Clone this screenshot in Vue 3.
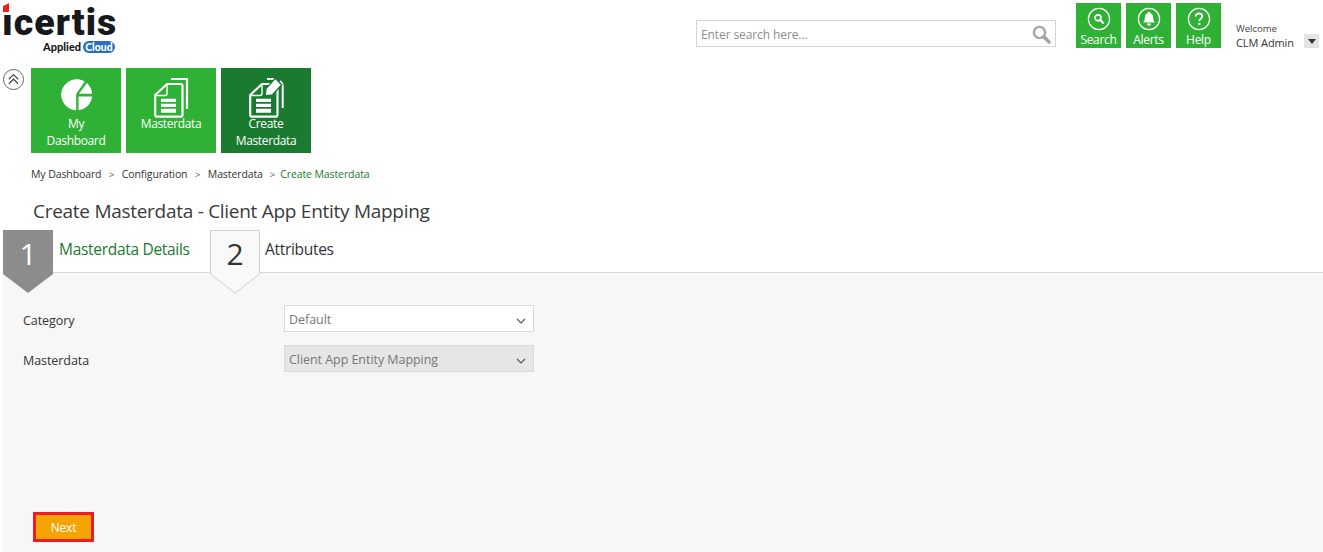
<script setup>
const topTiles = [
  { label: 'Search', icon: 'search' },
  { label: 'Alerts', icon: 'bell' },
  { label: 'Help', icon: 'help' }
]
const navTiles = [
  { lines: ['My', 'Dashboard'], icon: 'pie', active: false },
  { lines: ['Masterdata'], icon: 'docs', active: false },
  { lines: ['Create', 'Masterdata'], icon: 'create', active: true }
]
const crumbs = ['My Dashboard', 'Configuration', 'Masterdata']
</script>

<template>
  <div class="page">
    <header class="top">
      <div class="logo">
        <div class="wordmark">
          <span class="red-dot"></span>
          <span class="logo-text">ıcertis</span>
        </div>
        <div class="applied">
          <span>Applied</span><span class="cloud">Cloud</span>
        </div>
      </div>
      <div class="search">
        <span class="placeholder">Enter search here...</span>
        <svg class="search-glass" width="19" height="19" viewBox="0 0 19 19">
          <circle cx="7.5" cy="7.5" r="5.6" fill="none" stroke="#a6a6a6" stroke-width="2.4" />
          <path d="M11.8 11.8 L17 17" stroke="#a6a6a6" stroke-width="3.6" stroke-linecap="round" />
        </svg>
      </div>
      <div class="top-tiles">
        <div v-for="t in topTiles" :key="t.label" class="top-tile">
          <svg width="24" height="24" viewBox="0 0 24 24">
            <circle cx="12" cy="12" r="10.6" fill="none" stroke="#fff" stroke-width="1.3" />
            <g v-if="t.icon === 'search'">
              <circle cx="11" cy="10.8" r="3" fill="none" stroke="#fff" stroke-width="1.7" />
              <path d="M13.2 13 L16.2 16" stroke="#fff" stroke-width="2" stroke-linecap="round" />
            </g>
            <g v-else-if="t.icon === 'bell'">
              <path d="M12 4.8 C13 4.8 13.4 5.4 13.5 6.2 C15.6 6.9 16.2 8.8 16.2 11 C16.2 13.4 17 14.4 18 15.6 L6 15.6 C7 14.4 7.8 13.4 7.8 11 C7.8 8.8 8.4 6.9 10.5 6.2 C10.6 5.4 11 4.8 12 4.8 Z" fill="#fff" />
              <path d="M10 16.6 H14 C14 18 13 18.8 12 18.8 C11 18.8 10 18 10 16.6 Z" fill="#fff" />
            </g>
            <g v-else>
              <path d="M8.7 9.6 C8.7 7.6 10.2 6.5 12 6.5 C13.9 6.5 15.3 7.6 15.3 9.3 C15.3 11.6 12.3 11.6 12.3 14.2" fill="none" stroke="#fff" stroke-width="1.8" />
              <circle cx="12.3" cy="17" r="1.3" fill="#fff" />
            </g>
          </svg>
          <span class="top-label">{{ t.label }}</span>
        </div>
      </div>
      <div class="user">
        <div class="welcome">Welcome</div>
        <div class="user-name">CLM Admin</div>
      </div>
      <div class="user-caret"><i></i></div>
    </header>

    <nav class="nav">
      <div class="collapse">
        <svg width="21" height="21" viewBox="0 0 21 21">
          <circle cx="10.5" cy="10.5" r="10" fill="none" stroke="#666" stroke-width="1" />
          <path d="M5.8 10.2 L10.5 5.6 L15.2 10.2 M5.8 14.8 L10.5 10.2 L15.2 14.8" fill="none" stroke="#444" stroke-width="1.2" />
        </svg>
      </div>
      <div v-for="t in navTiles" :key="t.lines.join()" class="nav-tile" :class="{ active: t.active }">
        <svg class="nav-icon" width="90" height="47" viewBox="0 0 90 47">
          <g v-if="t.icon === 'pie'" fill="#fff">
            <path d="M53.8 13.5 A15.5 15.5 0 1 0 45.2 42.2 L45.2 26 Z" />
            <path d="M48 25.8 L55.9 15 A15.5 15.5 0 0 1 61 25.8 Z" />
            <path d="M47.5 28.4 H61.1 A15.5 15.5 0 0 1 47.5 42.1 Z" />
          </g>
          <g v-else>
            <path d="M29.2 27 L41 16 H54.5 Q56.5 16 56.5 18 V46.7 Q56.5 48.7 54.5 48.7 H31.2 Q29.2 48.7 29.2 46.7 Z" fill="none" stroke="#fff" stroke-width="2.2" />
            <path d="M29.5 27.5 H39 Q41 27.5 41 25.5 V16" fill="none" stroke="#fff" stroke-width="1.4" />
            <path d="M35 30.7 H50 V34 H35 Z M35 35.7 H50 V39 H35 Z M35 40.7 H50 V44.7 H35 Z" fill="#fff" />
            <path v-if="t.icon === 'docs'" d="M45 11 H61 V41" fill="none" stroke="#fff" stroke-width="2.2" />
            <template v-else>
              <path d="M46 11 H54 M59 13 Q61.7 15 61.7 18 V40" fill="none" stroke="#fff" stroke-width="2" />
              <path d="M44 28 L45 20.6 L54.3 10.3 L60.7 16.7 L51.4 27 Z" fill="#fff" stroke="#1a7a30" stroke-width="1.4" />
            </template>
          </g>
        </svg>
        <span v-for="l in t.lines" :key="l" class="nav-line">{{ l }}</span>
      </div>
    </nav>

    <div class="crumbs">
      <template v-for="c in crumbs" :key="c">
        <span class="crumb">{{ c }}</span>
        <span class="sep" :class="{ tight: c === 'Masterdata' }">&gt;</span>
      </template>
      <span class="crumb current">Create Masterdata</span>
    </div>

    <h1 class="title">Create Masterdata - Client App Entity Mapping</h1>

    <div class="steps">
      <div class="step first">
        <svg class="badge" width="50" height="64" viewBox="0 0 50 64">
          <path d="M0 0 H50 V44 L25 63 L0 44 Z" fill="#8c8c8c" />
        </svg>
        <span class="badge-num light">1</span>
        <span class="step-label done">Masterdata Details</span>
      </div>
      <div class="step second">
        <svg class="badge" width="50" height="64" viewBox="0 0 50 64">
          <path d="M.5 .5 H49.5 V44 L25 63 L.5 44 Z" fill="#f9f9f9" stroke="#cfcfcf" />
        </svg>
        <span class="badge-num">2</span>
        <span class="step-label">Attributes</span>
      </div>
    </div>

    <main class="panel">
      <div class="row">
        <label class="field-label">Category</label>
        <div class="select">
          <span>Default</span>
          <svg width="10" height="6" viewBox="0 0 10 6"><path d="M1 1 L5 5 L9 1" fill="none" stroke="#555" stroke-width="1.1" /></svg>
        </div>
      </div>
      <div class="row">
        <label class="field-label">Masterdata</label>
        <div class="select disabled">
          <span>Client App Entity Mapping</span>
          <svg width="10" height="6" viewBox="0 0 10 6"><path d="M1 1 L5 5 L9 1" fill="none" stroke="#555" stroke-width="1.1" /></svg>
        </div>
      </div>
      <button class="next" type="button">Next</button>
    </main>
  </div>
</template>

<style scoped>
.page {
  width: 1323px;
  height: 552px;
  overflow: hidden;
  display: flex;
  flex-direction: column;
  background: #fff;
  color: #333;
  font-family: "Open Sans", "Noto Sans", sans-serif;
}
.top {
  display: flex;
  height: 68px;
  flex: none;
}
.logo {
  width: 696px;
  flex: none;
  position: relative;
}
.wordmark {
  position: relative;
  height: 40px;
  padding-left: 2px;
  box-sizing: border-box;
  padding-top: 4px;
}
.logo-text {
  font-family: Roboto, "Liberation Sans", sans-serif;
  font-weight: 900;
  font-size: 37.5px;
  line-height: 36px;
  letter-spacing: 1px;
  color: #16181c;
  display: block;
}
.red-dot {
  position: absolute;
  left: 3px;
  top: 3px;
  width: 6px;
  height: 9px;
  background: #ed2024;
  clip-path: polygon(0 35%, 100% 0, 100% 100%, 0 100%);
}
.applied {
  position: absolute;
  left: 43px;
  top: 41px;
  display: flex;
  align-items: center;
  font-family: Lato, "Liberation Sans", sans-serif;
  font-weight: 900;
  font-size: 11px;
  line-height: 12px;
  color: #16181c;
}
.cloud {
  margin-left: 2px;
  background: #2a6ebb;
  color: #fff;
  border-radius: 6px;
  padding: 0 2px 0 2px;
  font-size: 10.5px;
}
.search {
  width: 360px;
  height: 27px;
  margin-top: 20px;
  flex: none;
  box-sizing: border-box;
  border: 1px solid #d4d4d4;
  display: flex;
  align-items: center;
  justify-content: space-between;
  padding: 0 4px 0 4px;
}
.placeholder {
  font-size: 12px;
  letter-spacing: -0.1px;
  color: #8e8e8e;
  padding-top: 2px;
}
.search-glass {
  margin-top: 1px;
}
.top-tiles {
  display: flex;
  gap: 5px;
  margin-left: 20px;
  margin-top: 3px;
}
.top-tile {
  width: 45px;
  height: 45px;
  background: #2eb135;
  color: #fff;
  display: flex;
  flex-direction: column;
  align-items: center;
  padding-top: 4px;
  box-sizing: border-box;
  font-size: 12px;
  line-height: 16px;
  letter-spacing: -0.3px;
}
.top-label {
  margin-top: 1px;
}
.user {
  margin-left: 15px;
  margin-top: 22px;
  width: 68px;
  flex: none;
}
.welcome {
  font-size: 9.5px;
  line-height: 13px;
  color: #444;
}
.user-name {
  font-size: 11px;
  line-height: 15px;
  letter-spacing: -0.1px;
  color: #333;
  white-space: nowrap;
}
.user-caret {
  width: 15px;
  height: 14px;
  margin-top: 34px;
  background: #e4e4e4;
  display: flex;
  align-items: center;
  justify-content: center;
}
.user-caret i {
  width: 0;
  height: 0;
  border-left: 4.5px solid transparent;
  border-right: 4.5px solid transparent;
  border-top: 5px solid #333;
}
.nav {
  display: flex;
  gap: 5px;
  height: 85px;
  flex: none;
  padding-left: 3px;
}
.collapse {
  width: 23px;
  flex: none;
  padding-top: 1px;
  line-height: 0;
}
.nav-tile {
  width: 90px;
  height: 85px;
  background: #2eb135;
  color: #fff;
  display: flex;
  flex-direction: column;
  align-items: center;
  font-size: 12px;
  letter-spacing: -0.35px;
  line-height: 17px;
}
.nav-tile.active {
  background: #1a7a30;
}
.nav-icon {
  flex: none;
  overflow: visible;
}
.nav-line {
  display: block;
}
.crumbs {
  display: flex;
  align-items: center;
  margin-top: 13px;
  padding-left: 31px;
  height: 16px;
  flex: none;
  font-size: 10.5px;
  letter-spacing: -0.1px;
  color: #333;
}
.sep {
  margin: 0 7.5px;
  font-size: 9.5px;
  color: #555;
}
.sep.tight {
  margin: 0 5px 0 7px;
}
.crumb.current {
  color: #1a7a30;
}
.title {
  margin: 16px 0 0 33px;
  height: 27px;
  flex: none;
  font-size: 19px;
  line-height: 27px;
  font-weight: 400;
  color: #3a3a3a;
  letter-spacing: -0.28px;
}
.steps {
  margin: 5px 0 0 3px;
  height: 42px;
  flex: none;
  display: flex;
  position: relative;
  z-index: 1;
}
.step {
  position: relative;
  padding-left: 56px;
  line-height: 39px;
  font-size: 15.5px;
  letter-spacing: -0.3px;
}
.step.first {
  width: 207px;
  box-sizing: border-box;
}
.step.second {
  padding-left: 55px;
}
.badge {
  position: absolute;
  left: 0;
  top: 0;
}
.badge-num {
  position: absolute;
  left: 0;
  top: 0;
  width: 50px;
  text-align: center;
  font-size: 30px;
  line-height: 48px;
  letter-spacing: 0;
  color: #333;
}
.badge-num.light {
  color: #fff;
}
.step-label.done {
  color: #1a7a30;
}
.panel {
  flex: 1;
  margin-left: 3px;
  background: #f7f7f7;
  border-top: 1px solid #d9d9d9;
  padding: 32px 0 10px 20px;
  display: flex;
  flex-direction: column;
  gap: 13px;
}
.row {
  display: flex;
  align-items: center;
  height: 27px;
}
.field-label {
  width: 261px;
  flex: none;
  font-size: 12.5px;
  letter-spacing: -0.07px;
  color: #333;
  padding-top: 4px;
}
.select {
  width: 250px;
  height: 27px;
  box-sizing: border-box;
  border: 1px solid #d9d9d9;
  background: #fff;
  display: flex;
  align-items: center;
  justify-content: space-between;
  padding: 2px 7px 0 4px;
  font-size: 12.5px;
  letter-spacing: -0.05px;
  color: #777;
}
.select svg {
  margin-top: 2px;
}
.select.disabled {
  background: #e6e6e6;
}
.next {
  margin-top: auto;
  margin-left: 10px;
  width: 61px;
  height: 30px;
  box-sizing: border-box;
  border: 3px solid #ed1c24;
  background: #f5a305;
  color: #fff;
  font-family: inherit;
  font-size: 12px;
  letter-spacing: -0.2px;
  padding: 0;
}
</style>
